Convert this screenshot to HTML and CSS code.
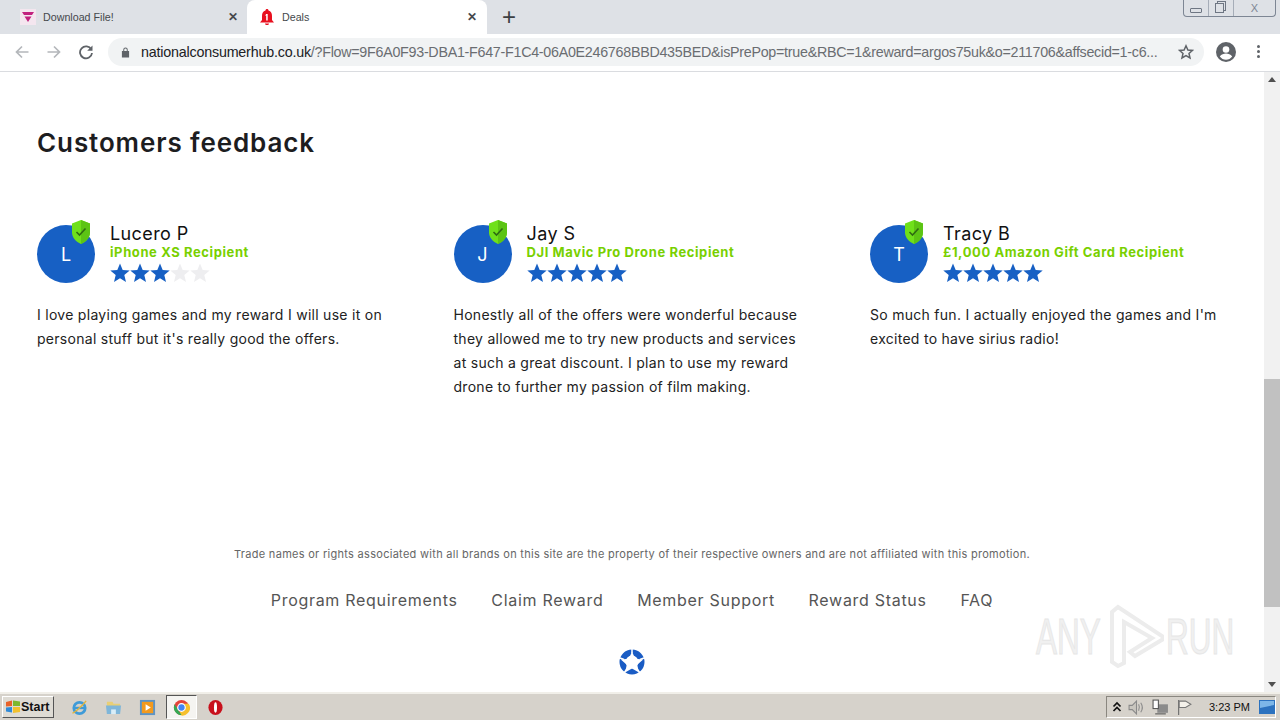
FILE: index.html
```html
<!DOCTYPE html>
<html lang="en">
<head>
  <meta charset="UTF-8" />
  <title>Deals</title>
  <link rel="stylesheet" href="styles.css">
</head>
<body>
  <svg class="defs" width="0" height="0">
    <symbol id="star" viewBox="0 0 20 20"><path d="M10 .6l2.7 6.5 7 .5-5.4 4.500 1.700 6.900L10 15.300l-6 3.700 1.700-6.900L.3 7.600l7-.5z"/></symbol>
    <symbol id="shield" viewBox="0 0 20 24"><path fill="#6fe01a" d="M10 0l9 3.600v8.600c0 5.400-3.800 9.400-9 11.800C4.800 21.600 1 17.600 1 12.200V3.600z"/><path fill="#5cc414" d="M10 0l9 3.600v8.600c0 5.400-3.800 9.400-9 11.800z"/><path fill="none" stroke="#2f6b12" stroke-width="1.600" d="M5.500 12l3 3 6-6.500"/></symbol>
  </svg>

  <!-- Browser tabs -->
  <div class="tabstrip">
    <div class="tab">
      <svg class="favicon" viewBox="0 0 16 16"><rect width="16" height="16" fill="#f4e6ef"/><path fill="#c2217f" d="M2 3h12l-2 3H4zM4.500 7.500h7L8 13z"/></svg>
      <span class="tab-title">Download File!</span>
      <span class="tab-close">✕</span>
    </div>
    <div class="tab tab-active">
      <svg class="favicon" viewBox="0 0 16 16"><path fill="#e8101f" d="M8 0c1 0 1.500.7 1.500 1.500C12 2.300 13 4.300 13 7v4l2 2.500H1L3 11V7c0-2.700 1-4.700 3.500-5.500C6.500.7 7 0 8 0zM6 14.500h4c0 1-1 1.500-2 1.500s-2-.5-2-1.500z"/><path fill="#fff" d="M7 5h1.700v6.500H7.200V6.600L6.300 7z"/></svg>
      <span class="tab-title">Deals</span>
      <span class="tab-close">✕</span>
    </div>
    <span class="new-tab">+</span>
    <div class="window-btns">
      <span class="win-btn"><i class="win-min"></i></span>
      <span class="win-btn"><i class="win-restore"></i></span>
      <span class="win-btn win-x">X</span>
    </div>
  </div>

  <div class="toolbar">
    <svg class="nav-icon" viewBox="0 0 16 16"><path fill="none" stroke="#b4b7bb" stroke-width="1.700" d="M14.500 8H2.500M8 2.500L2.500 8 8 13.500"/></svg>
    <svg class="nav-icon" viewBox="0 0 16 16"><path fill="none" stroke="#b4b7bb" stroke-width="1.700" d="M1.500 8h12M8 2.500L13.500 8 8 13.500"/></svg>
    <svg class="nav-icon" viewBox="0 0 16 16"><path fill="none" stroke="#5f6368" stroke-width="1.800" d="M13.300 5.500A6 6 0 1 0 14 9"/><path fill="#5f6368" d="M14.500 1.500v5.300H9.200z"/></svg>
    <div class="omnibox">
      <svg class="lock" viewBox="0 0 10 12"><path fill="#5f6368" d="M1 5h8v7H1zM2.500 5V3.500a2.500 2.500 0 0 1 5 0V5H6.400V3.500a1.400 1.400 0 0 0-2.800 0V5z"/></svg>
      <span class="url"><b>nationalconsumerhub.co.uk</b>/?Flow=9F6A0F93-DBA1-F647-F1C4-06A0E246768BBD435BED&amp;isPrePop=true&amp;RBC=1&amp;reward=argos75uk&amp;o=211706&amp;affsecid=1-c6...</span>
      <svg class="bookmark" viewBox="0 0 16 16"><path fill="none" stroke="#5f6368" stroke-width="1.500" d="M8 1.800l1.900 4.200 4.500.4-3.400 3 1 4.500L8 11.500l-4 2.400 1-4.500-3.400-3 4.500-.4z"/></svg>
    </div>
    <svg class="profile" viewBox="0 0 20 20"><circle cx="10" cy="10" r="10" fill="#5f6368"/><circle cx="10" cy="7.500" r="3.300" fill="#fff"/><path fill="#fff" d="M3.800 14.500c1.500-2.200 4-3 6.200-3s4.700.8 6.200 3c-1.500 2-3.700 3.300-6.200 3.300s-4.700-1.300-6.200-3.300z"/></svg>
    <span class="menu-dots"><i></i><i></i><i></i></span>
  </div>

  <div class="viewport">
    <main class="page">
      <h1 class="heading">Customers feedback</h1>

      <section class="reviews">
        <article class="review">
          <div class="review-head">
            <div class="avatar">L<svg class="badge"><use href="#shield"/></svg></div>
            <div>
              <div class="name">Lucero P</div>
              <div class="prize">iPhone XS Recipient</div>
              <div class="stars">
                <svg class="star"><use href="#star"/></svg><svg class="star"><use href="#star"/></svg><svg class="star"><use href="#star"/></svg><svg class="star star-off"><use href="#star"/></svg><svg class="star star-off"><use href="#star"/></svg>
              </div>
            </div>
          </div>
          <p class="quote">I love playing games and my reward I will use it on personal stuff but it's really good the offers.</p>
        </article>

        <article class="review">
          <div class="review-head">
            <div class="avatar">J<svg class="badge"><use href="#shield"/></svg></div>
            <div>
              <div class="name">Jay S</div>
              <div class="prize">DJI Mavic Pro Drone Recipient</div>
              <div class="stars">
                <svg class="star"><use href="#star"/></svg><svg class="star"><use href="#star"/></svg><svg class="star"><use href="#star"/></svg><svg class="star"><use href="#star"/></svg><svg class="star"><use href="#star"/></svg>
              </div>
            </div>
          </div>
          <p class="quote">Honestly all of the offers were wonderful because they allowed me to try new products and services at such a great discount. I plan to use my reward drone to further my passion of film making.</p>
        </article>

        <article class="review">
          <div class="review-head">
            <div class="avatar">T<svg class="badge"><use href="#shield"/></svg></div>
            <div>
              <div class="name">Tracy B</div>
              <div class="prize">£1,000 Amazon Gift Card Recipient</div>
              <div class="stars">
                <svg class="star"><use href="#star"/></svg><svg class="star"><use href="#star"/></svg><svg class="star"><use href="#star"/></svg><svg class="star"><use href="#star"/></svg><svg class="star"><use href="#star"/></svg>
              </div>
            </div>
          </div>
          <p class="quote">So much fun. I actually enjoyed the games and I'm excited to have sirius radio!</p>
        </article>
      </section>

      <footer class="footer">
        <p class="legal">Trade names or rights associated with all brands on this site are the property of their respective owners and are not affiliated with this promotion.</p>
        <nav class="footer-nav">
          <a>Program Requirements</a>
          <a>Claim Reward</a>
          <a>Member Support</a>
          <a>Reward Status</a>
          <a>FAQ</a>
        </nav>
        <svg class="footer-logo" viewBox="0 0 26 26">
          <circle cx="13" cy="13" r="9.500" fill="none" stroke="#1a5cc4" stroke-width="6"/>
          <path fill="#fff" d="M13 2.500l3.200 7.300 8 .7-6 5.300 1.800 7.800-7-4.200-7 4.200 1.800-7.800-6-5.300 8-.7z"/>
          <path stroke="#fff" stroke-width="1.500" d="M13 0v4M25 9l-4 1.500M21 24l-2.500-3.500M5 24l2.500-3.500M1 9l4 1.500"/>
        </svg>
      </footer>
    </main>

    <div class="scrollbar">
      <span class="arrow arrow-up"></span>
      <div class="track"><div class="thumb"></div></div>
      <span class="arrow arrow-down"></span>
    </div>

    <div class="watermark">
      <span class="wm-text">ANY</span>
      <svg viewBox="0 0 56 66"><path fill="none" stroke="#ececec" stroke-width="4" d="M4 8v50l6 4 6-3V18l28 16-22 14 5 4 30-18L10 3z"/></svg>
      <span class="wm-text">RUN</span>
    </div>
  </div>

  <!-- Windows taskbar -->
  <div class="taskbar">
    <div class="start">
      <svg class="start-flag" viewBox="0 0 16 16"><path fill="#e8622a" d="M1 3l6-1.500V7L1 7.500z"/><path fill="#7cb82f" d="M8 1.500l7 1V7l-7 0z"/><path fill="#2f8ad8" d="M1 8.500L7 8v5.500l-6-1z"/><path fill="#f2c12e" d="M8 8h7v5l-7 1z"/></svg>
      <span>Start</span>
    </div>
    <div class="quicklaunch">
      <span class="task">
        <svg viewBox="0 0 18 18"><circle cx="9" cy="9.500" r="6" fill="none" stroke="#3f9bd8" stroke-width="3"/><path stroke="#3f9bd8" stroke-width="2.500" d="M3 9.500h12"/><path fill="none" stroke="#e3b53c" stroke-width="1.500" d="M1.500 15C5 14 13 6 16 2"/></svg>
      </span>
      <span class="task">
        <svg viewBox="0 0 18 18"><path fill="#e9cf75" d="M2 3h6l1 2h7v3H2z"/><path fill="#7fb6d9" d="M1 7h16l-1 9H2z"/><path fill="#d9edf7" d="M6.500 11h5v5h-5z"/></svg>
      </span>
      <span class="task">
        <svg viewBox="0 0 18 18"><rect x="1" y="1" width="16" height="16" fill="#5d94c6"/><rect x="3" y="3" width="12" height="12" fill="#f39a1e"/><path fill="#fff" d="M7 5.500L12.500 9 7 12.500z"/></svg>
      </span>
      <span class="task task-active">
        <svg viewBox="0 0 18 18"><circle cx="9" cy="9" r="8" fill="#e3433a"/><path fill="#f6c02c" d="M9 5h7.500A8 8 0 0 1 6 16.500L9.500 11z"/><path fill="#34a853" d="M1.700 5.500L6 12.500l3 4.500A8 8 0 0 1 1.700 5.500z"/><circle cx="9" cy="9" r="4" fill="#4285f4" stroke="#fff" stroke-width="1.300"/></svg>
      </span>
      <span class="task">
        <svg viewBox="0 0 18 18"><ellipse cx="9" cy="9" rx="7.500" ry="8" fill="#c8101c"/><ellipse cx="9" cy="9" rx="1.600" ry="5.500" fill="#fff"/></svg>
      </span>
    </div>
    <div class="tray">
      <svg class="tray-up" viewBox="0 0 10 12"><path fill="none" stroke="#111" stroke-width="1.700" d="M1.500 5.500L5 2l3.500 3.500M1.500 10L5 6.500 8.500 10"/></svg>
      <svg class="tray-icon" viewBox="0 0 16 16"><path fill="#c9c6bf" stroke="#8a8a8a" d="M1 6h3l4-4v12l-4-4H1z"/><path fill="none" stroke="#8a8a8a" d="M10 5c1 2 1 4 0 6M12 3.500c2 3 2 6 0 9"/></svg>
      <svg class="tray-icon" viewBox="0 0 16 16"><rect x="5" y="5" width="10" height="8" fill="#8b8b8b"/><rect x="1" y="1" width="5" height="8" fill="#fff" stroke="#555"/><path stroke="#555" d="M3 14h10"/></svg>
      <svg class="tray-icon" viewBox="0 0 16 16"><path stroke="#666" d="M2.500 1v14"/><path fill="#f4f1ea" stroke="#777" d="M3 2h6l5 3-5 3H3z"/></svg>
      <span class="clock">3:23 PM</span>
      <svg class="show-desktop" viewBox="0 0 16 16"><rect width="16" height="14" y="1" fill="#2c72bf"/><path fill="#7cb6e8" d="M1 2h14v4L1 9z"/></svg>
    </div>
  </div>
</body>
</html>
```

FILE: styles.css
```css
html, body {
  margin: 0;
  padding: 0;
  height: 720px;
  overflow: hidden;
}
body {
  display: flex;
  flex-direction: column;
  width: 1280px;
  background: #fff;
  font-family: "Liberation Sans", sans-serif;
}
.defs {
  position: absolute;
}

/* browser chrome */
.tabstrip {
  display: flex;
  height: 34px;
  flex: none;
  align-items: center;
  background: #dee1e6;
  padding-left: 8px;
}
.tab {
  display: flex;
  align-items: center;
  box-sizing: border-box;
  width: 240px;
  height: 34px;
  padding: 0 10px 0 12px;
  font-size: 10.700px;
  color: #45484c;
}
.tab-active {
  margin-left: -1px;
  background: #fff;
  border-radius: 8px 8px 0 0;
}
.favicon {
  width: 16px;
  height: 16px;
  margin-right: 7px;
}
.tab-title {
  flex: 1;
}
.tab-close {
  font-size: 12px;
  font-weight: bold;
  color: #45484c;
}
.new-tab {
  margin-left: 15px;
  font-size: 24px;
  line-height: 1;
  color: #3c4043;
}
.window-btns {
  display: flex;
  align-self: flex-start;
  box-sizing: border-box;
  height: 17px;
  margin-left: auto;
  margin-right: 4px;
  border: 1px solid #7d8694;
  border-top: none;
  border-radius: 0 0 4px 4px;
}
.win-btn {
  display: flex;
  align-items: center;
  justify-content: center;
  width: 24px;
  border-right: 1px solid #a6adb8;
  font-size: 11px;
  color: #7d8694;
}
.win-x {
  width: 41px;
  border-right: none;
}
.win-min {
  width: 10px;
  height: 3px;
  margin-top: 5px;
  border: 1px solid #6e7683;
  border-radius: 1px;
}
.win-restore {
  width: 7px;
  height: 8px;
  margin-right: 3px;
  border: 1px solid #6e7683;
  box-shadow: 2px -2px 0 -1px #dee1e6, 2px -2px 0 0 #6e7683;
}
.toolbar {
  display: flex;
  flex: none;
  align-items: center;
  box-sizing: border-box;
  height: 38px;
  padding: 0 0 2px 14px;
  background: #fff;
  border-bottom: 1px solid #dadce0;
}
.nav-icon {
  width: 16px;
  height: 16px;
  margin-right: 16px;
}
.omnibox {
  display: flex;
  align-items: center;
  box-sizing: border-box;
  width: 1096px;
  height: 28px;
  margin-left: -2px;
  padding: 0 10px 0 13px;
  background: #f1f3f4;
  border-radius: 14px;
}
.lock {
  width: 9px;
  height: 12px;
  margin-right: 11px;
}
.url {
  flex: 1;
  overflow: hidden;
  white-space: nowrap;
  font-size: 14.300px;
  letter-spacing: -.28px;
  color: #6a6d71;
}
.url b {
  font-weight: normal;
  letter-spacing: -.2px;
  color: #202124;
}
.bookmark {
  width: 16px;
  height: 16px;
}
.profile {
  width: 20px;
  height: 20px;
  margin-left: 12px;
}
.menu-dots {
  display: flex;
  flex-direction: column;
  gap: 2px;
  margin-left: 21px;
}
.menu-dots i {
  width: 3px;
  height: 3px;
  border-radius: 50%;
  background: #5f6368;
}

/* page */
.viewport {
  position: relative;
  display: flex;
  flex: 1;
  min-height: 0;
}
.page {
  flex: 1;
  min-width: 0;
  padding: 54px 0 0 37px;
}
.heading {
  margin: 0;
  font-family: Inter, sans-serif;
  font-size: 26px;
  line-height: 34px;
  font-weight: 600;
  letter-spacing: .9px;
  color: #1d1d1f;
}
.reviews {
  display: flex;
  margin-top: 61px;
}
.review {
  flex: none;
  width: 416.500px;
  padding-right: 66px;
  box-sizing: border-box;
}
.review-head {
  display: flex;
  gap: 15px;
}
.avatar {
  position: relative;
  display: flex;
  flex: none;
  align-items: center;
  justify-content: center;
  width: 58px;
  height: 58px;
  margin-top: 4px;
  border-radius: 50%;
  background: #1760c4;
  color: #fff;
  font-family: Inter, sans-serif;
  font-size: 18px;
}
.badge {
  position: absolute;
  top: -5px;
  right: 4px;
  width: 20px;
  height: 24px;
}
.name {
  margin-top: 2px;
  font-family: Inter, sans-serif;
  font-size: 18px;
  line-height: 21px;
  color: #111;
  letter-spacing: .4px;
}
.prize {
  font-family: Inter, sans-serif;
  font-size: 13px;
  line-height: 16px;
  font-weight: 700;
  letter-spacing: .6px;
  color: #78d000;
  white-space: nowrap;
}
.stars {
  display: flex;
  margin-top: 3px;
}
.star {
  width: 20px;
  height: 20px;
  fill: #1760c4;
}
.star-off {
  fill: #eeeef0;
}
.quote {
  margin: 20px 0 0;
  font-family: Inter, sans-serif;
  font-size: 14px;
  line-height: 24px;
  letter-spacing: .28px;
  color: #222;
}
.footer {
  display: flex;
  flex-direction: column;
  align-items: center;
  margin: 147px 0 0 -37px;
}
.legal {
  margin: 0;
  font-family: Inter, sans-serif;
  font-size: 11px;
  line-height: 16px;
  letter-spacing: .29px;
  color: #666;
}
.footer-nav {
  display: flex;
  gap: 33.750px;
  margin-top: 27px;
  font-family: Inter, sans-serif;
  font-size: 16px;
  line-height: 22px;
  letter-spacing: .7px;
  color: #555;
}
.footer-logo {
  width: 26px;
  height: 26px;
  margin-top: 38px;
}
.scrollbar {
  display: flex;
  flex: none;
  flex-direction: column;
  width: 16px;
  background: #f1f1f1;
}
.arrow {
  width: 0;
  height: 0;
  margin: 5px auto;
  border: 4px solid transparent;
  border-top: none;
  border-bottom: 5px solid #505050;
}
.arrow-down {
  border-top: 5px solid #505050;
  border-bottom: none;
}
.track {
  flex: 1;
  padding-top: 292px;
}
.thumb {
  height: 228px;
  background: #c1c1c1;
}
.watermark {
  position: absolute;
  right: 52px;
  bottom: 22px;
  display: flex;
  align-items: center;
  gap: 10px;
  font-family: "Liberation Sans", sans-serif;
  font-size: 50px;
  color: #f0f0f0;
}
.watermark svg {
  width: 56px;
  height: 66px;
  margin-right: -8px;
}
.wm-text {
  display: inline-block;
  width: 62px;
  transform: scaleX(.63);
  transform-origin: left center;
  white-space: nowrap;
  -webkit-text-stroke: 1px #e6e6e6;
}

/* taskbar */
.taskbar {
  display: flex;
  flex: none;
  align-items: center;
  box-sizing: border-box;
  height: 28px;
  background: #d6d2cb;
  border-top: 2px solid #f1efe9;
}
.start {
  display: flex;
  align-items: center;
  box-sizing: border-box;
  width: 52px;
  height: 22px;
  margin-left: 2px;
  padding-left: 2px;
  background: #dedbd4;
  border: 1px solid;
  border-color: #fff #555 #555 #fff;
  font-size: 12.500px;
  font-weight: bold;
  color: #111;
}
.start-flag {
  width: 16px;
  height: 16px;
}
.quicklaunch {
  display: flex;
  gap: 3px;
  margin-left: 10px;
}
.task {
  display: flex;
  align-items: center;
  justify-content: center;
  box-sizing: border-box;
  width: 31px;
  height: 24px;
}
.task svg {
  width: 17px;
  height: 17px;
}
.task-active {
  background: #f5f4f1;
  border: 1px solid;
  border-color: #555 #fff #fff #555;
}
.tray {
  display: flex;
  align-items: center;
  box-sizing: border-box;
  width: 170px;
  height: 22px;
  margin-left: auto;
  margin-right: 4px;
  padding-left: 5px;
  border: 1px solid;
  border-color: #8a8780 #fff #fff #8a8780;
  color: #111;
}
.tray-up {
  width: 10px;
  height: 12px;
  margin-right: 6px;
}
.tray-icon {
  width: 17px;
  height: 17px;
  margin-right: 7px;
}
.clock {
  margin-left: 9px;
  font-size: 11px;
}
.show-desktop {
  width: 16px;
  height: 16px;
  margin-left: auto;
}
```
